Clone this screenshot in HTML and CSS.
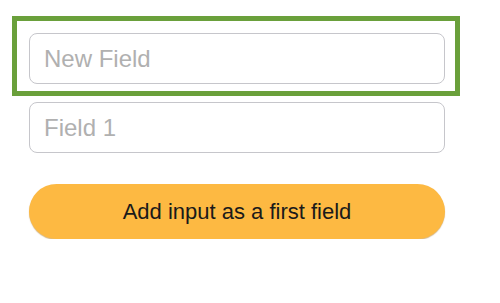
FILE: index.html
```html
<!DOCTYPE html>
<html lang="en">
<head>
    <meta charset="UTF-8">
    <meta name="viewport" content="width=device-width, initial-scale=1.0">
    <title>Fields</title>
    <link rel="stylesheet" href="styles.css">
</head>
<body>
    <div class="container">
        <div class="field-list">
            <div class="new-field">
                <input type="text" class="field-input" placeholder="New Field">
            </div>
            <div class="field-row">
                <input type="text" class="field-input" placeholder="Field 1">
            </div>
        </div>
        <button class="add-button">Add input as a first field</button>
    </div>
</body>
</html>
```

FILE: styles.css
```css
body {
    margin: 0;
    font-family: 'Liberation Sans', Arial, sans-serif;
    background-color: #ffffff;
}

.container {
    padding: 16px 0 0 12px;
    width: 448px;
}

.field-list {
    display: flex;
    flex-direction: column;
    gap: 6px;
}

.new-field {
    border: 5px solid #6aa03b;
    padding: 12px 10px 7px 12px;
}

.field-row {
    padding-left: 17px;
}

.field-input {
    display: block;
    box-sizing: border-box;
    width: 416px;
    height: 51px;
    margin: 0;
    padding: 0 14px;
    border: 1px solid #c6c6cb;
    border-radius: 8px;
    font-family: 'Liberation Sans', Arial, sans-serif;
    font-size: 24px;
    color: #333;
    outline: none;
}

.field-input::placeholder {
    color: #b0b0b0;
}

.add-button {
    display: block;
    width: 416px;
    height: 55px;
    margin: 31px 0 0 17px;
    border: none;
    border-radius: 28px;
    background-color: #fdb942;
    box-shadow: 0 1px 1px rgba(160, 100, 0, 0.45);
    font-family: 'Liberation Sans', Arial, sans-serif;
    font-size: 22px;
    color: #1a1a1a;
    cursor: pointer;
}
```
